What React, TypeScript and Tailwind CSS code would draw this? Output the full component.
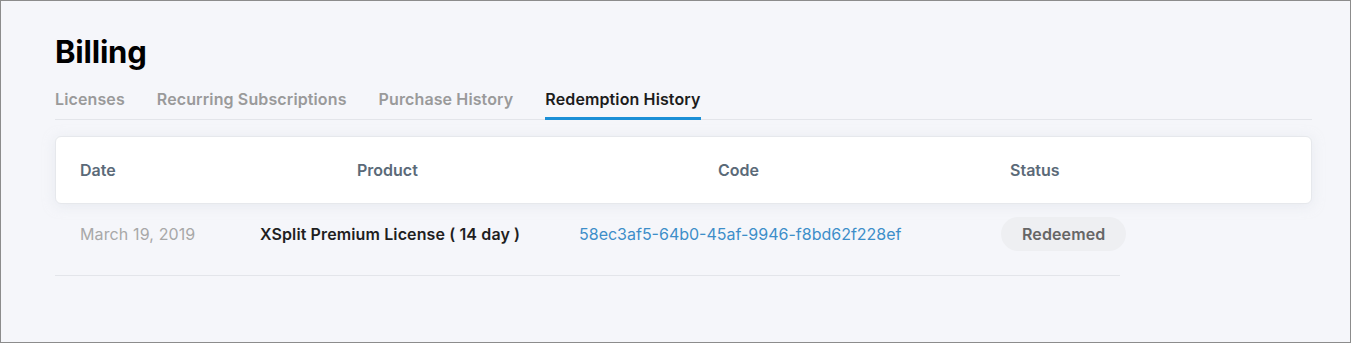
import React from "react";

const TABS = ["Licenses", "Recurring Subscriptions", "Purchase History", "Redemption History"];
const ACTIVE = "Redemption History";

const ROWS = [
    {
        date: "March 19, 2019",
        product: "XSplit Premium License ( 14 day )",
        code: "58ec3af5-64b0-45af-9946-f8bd62f228ef",
        status: "Redeemed",
    },
];

export default function App() {
    return (
        <div className="w-[1351px] h-[343px] border border-[#8c8c8c] bg-[#f5f6fa] font-['Inter','Liberation_Sans',sans-serif] overflow-hidden">
            <div className="pl-[54px] pr-[38px] pt-[32px]">
                <h1 className="text-[31px] leading-[38px] font-bold text-black tracking-[-0.2px]">Billing</h1>

                {/* Tabs */}
                <div className="mt-[18px] flex gap-[32px] border-b border-[#e3e5ea]">
                    {TABS.map(tab => (
                        <div
                            key={tab}
                            className={`pb-[8px] text-[16px] leading-[20px] font-semibold tracking-[0.12px] border-b-[3px] -mb-px ${tab === ACTIVE ? "text-[#1c1c1c] border-[#1b8fd6]" : "text-[#9a9a9a] border-transparent"}`}
                        >
                            {tab}
                        </div>
                    ))}
                </div>

                {/* Table header */}
                <div className="mt-[16px] h-[68px] bg-white border border-[#e6e8ec] rounded-[6px] shadow-[0_2px_12px_rgba(220,224,232,0.5)] flex items-center pl-[24px] text-[16px] font-semibold text-[#5b6a78]">
                    <div className="w-[277px]">Date</div>
                    <div className="w-[361px]">Product</div>
                    <div className="w-[292px]">Code</div>
                    <div>Status</div>
                </div>

                {/* Rows */}
                <div className="w-[1065px]">
                    {ROWS.map(row => (
                        <div key={row.code} className="h-[72px] flex items-start pt-[13px] pl-[25px] border-b border-[#e3e5ea] text-[16px]">
                            <div className="w-[180px] shrink-0 leading-[34px] tracking-[0.12px] text-[#a8a8a8]">{row.date}</div>
                            <div className="w-[319px] shrink-0 leading-[34px] tracking-[0.12px] font-semibold text-[#1f1f1f]">{row.product}</div>
                            <div className="w-[422px] shrink-0 leading-[34px] text-[#3d8ec9]">{row.code}</div>
                            <div className="h-[34px] shrink-0 px-[21px] flex items-center rounded-full bg-[#eeeff2] font-semibold tracking-[0.12px] text-[#666]">
                                {row.status}
                            </div>
                        </div>
                    ))}
                </div>
            </div>
        </div>
    );
}
